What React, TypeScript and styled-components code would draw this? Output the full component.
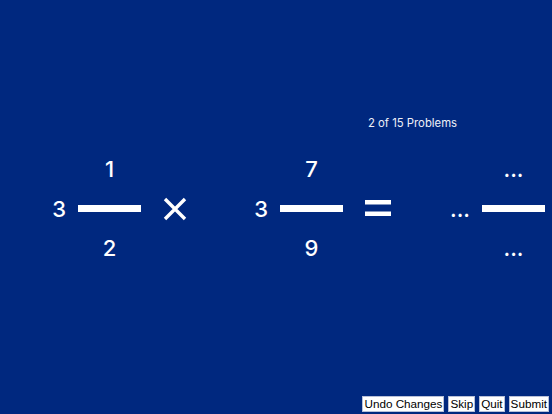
import React from "react";
import styled, { createGlobalStyle } from "styled-components";

const GlobalStyle = createGlobalStyle`
  html, body {
    margin: 0;
    padding: 0;
    background: #00287f;
  }
  body {
    font-family: Inter, "Liberation Sans", sans-serif;
  }
`;

const Page = styled.div`
  height: 100vh;
  display: flex;
  flex-direction: column;
  color: #ffffff;
  overflow: hidden;
`;

const Status = styled.div`
  padding: 115px 0 0 368px;
  font-size: 11.3px;
  line-height: 16px;
  color: #eef0f8;
`;

const Equation = styled.div`
  display: flex;
  align-items: center;
  padding: 25px 0 0 40px;
`;

const Mixed = styled.div`
  width: 101px;
  display: flex;
  align-items: center;
  justify-content: flex-end;
  gap: 12px;
`;

const Digit = styled.div`
  font-size: 22px;
  font-weight: 500;
  line-height: 26px;
  height: 26px;
  text-align: center;
`;

const Fraction = styled.div`
  width: 63px;
  display: flex;
  flex-direction: column;
  align-items: center;
  gap: 23px;
`;

const Bar = styled.div`
  width: 63px;
  height: 7px;
  background: #ffffff;
`;

const Operator = styled.div`
  width: 101px;
  padding-left: 22px;
  box-sizing: border-box;
  display: flex;
  align-items: center;
`;

const Footer = styled.div`
  margin-top: auto;
  display: flex;
  justify-content: flex-end;
  gap: 4px;
  padding: 0 3px 2px 0;
`;

const Button = styled.button`
  font-family: "Liberation Sans", Arial, sans-serif;
  font-size: 11.7px;
  line-height: 14px;
  height: 16px;
  padding: 0 1px;
  margin: 0;
  border: 1px solid #b8c0d8;
  border-radius: 0;
  background: #ffffff;
  color: #000000;
`;

const Times = () => (
  <svg width="24" height="24" viewBox="0 0 24 24">
    <path d="M2 2 L22 22 M22 2 L2 22" stroke="#fff" strokeWidth="3.4" />
  </svg>
);

const Equals = () => (
  <svg width="26" height="18" viewBox="0 0 26 18">
    <rect x="0" y="0" width="26" height="4.5" fill="#fff" />
    <rect x="0" y="11.5" width="26" height="4.5" fill="#fff" />
  </svg>
);

type Term = { whole: string; num: string; den: string };

const MixedNumber = ({ whole, num, den }: Term) => (
  <Mixed>
    <Digit>{whole}</Digit>
    <Fraction>
      <Digit>{num}</Digit>
      <Bar />
      <Digit>{den}</Digit>
    </Fraction>
  </Mixed>
);

export default function App() {
  return (
    <Page>
      <GlobalStyle />
      <Status>2 of 15 Problems</Status>
      <Equation>
        <MixedNumber whole="3" num="1" den="2" />
        <Operator>
          <Times />
        </Operator>
        <MixedNumber whole="3" num="7" den="9" />
        <Operator>
          <Equals />
        </Operator>
        <MixedNumber whole="..." num="..." den="..." />
      </Equation>
      <Footer>
        <Button>Undo Changes</Button>
        <Button>Skip</Button>
        <Button>Quit</Button>
        <Button>Submit</Button>
      </Footer>
    </Page>
  );
}
